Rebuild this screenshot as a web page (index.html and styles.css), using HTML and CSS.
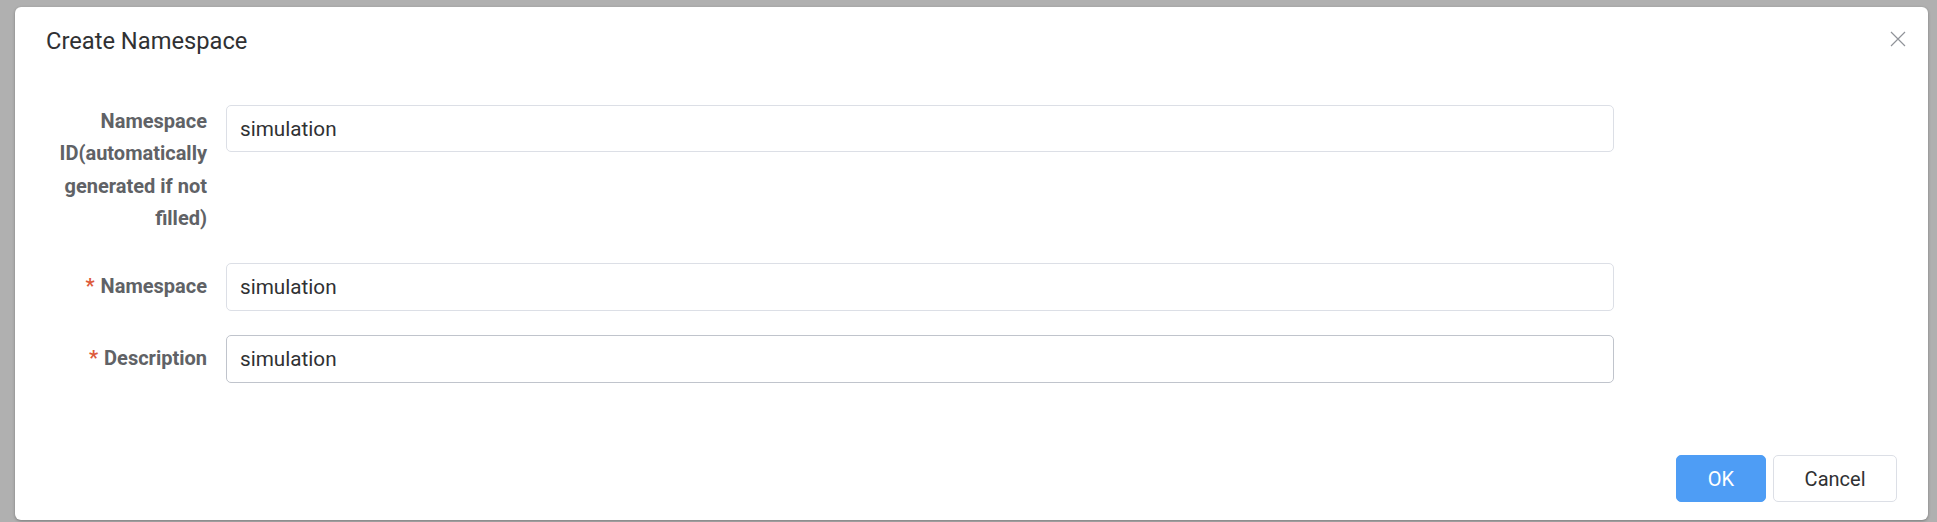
FILE: index.html
```html
<!DOCTYPE html>
<html lang="en">
<head>
<meta charset="utf-8">
<title>Create Namespace</title>
<link rel="stylesheet" href="styles.css">
</head>
<body>
<div class="dialog">
  <div class="dialog-header">
    <span class="dialog-title">Create Namespace</span>
    <button class="dialog-close" type="button" aria-label="Close">
      <svg width="16" height="16" viewBox="0 0 16 16"><path d="M1 1 L15 15 M15 1 L1 15" stroke="#909399" stroke-width="1.2" fill="none"/></svg>
    </button>
  </div>
  <div class="dialog-body">
    <div class="form-item form-item-first">
      <label class="form-label form-label-wrap">Namespace ID(automatically generated if not filled)</label>
      <div class="form-content"><input class="form-input" type="text" value="simulation"></div>
    </div>
    <div class="form-item form-item-second">
      <label class="form-label is-required">Namespace</label>
      <div class="form-content"><input class="form-input" type="text" value="simulation"></div>
    </div>
    <div class="form-item form-item-last">
      <label class="form-label is-required">Description</label>
      <div class="form-content"><input class="form-input is-hover" type="text" value="simulation"></div>
    </div>
  </div>
  <div class="dialog-footer">
    <button class="btn btn-primary" type="button">OK</button>
    <button class="btn btn-default" type="button">Cancel</button>
  </div>
</div>
</body>
</html>
```

FILE: styles.css
```css
html, body {
  margin: 0;
  padding: 0;
}
body {
  background: #b0b0b0;
  font-family: Roboto, "Liberation Sans", Arial, sans-serif;
  height: 522px;
  overflow: hidden;
}
.dialog {
  margin: 7px 9px 0 15px;
  background: #ffffff;
  border-radius: 6px;
  box-shadow: 0 1px 3px rgba(0, 0, 0, 0.3);
  display: flex;
  flex-direction: column;
}
.dialog-header {
  display: flex;
  justify-content: space-between;
  align-items: flex-start;
  padding: 18.6px 22px 0 31px;
}
.dialog-title {
  font-size: 23.7px;
  line-height: 30px;
  color: #303133;
}
.dialog-close {
  margin-top: 5px;
  width: 16px;
  height: 16px;
  padding: 0;
  border: 0;
  background: transparent;
  display: flex;
}
.dialog-body {
  padding: 49.4px 0 0 30px;
}
.form-item {
  display: flex;
  align-items: flex-start;
  margin-bottom: 24.5px;
}
.form-item-first {
  margin-bottom: 28.3px;
}
.form-item-last {
  margin-bottom: 0;
}
.form-label {
  box-sizing: border-box;
  width: 181px;
  padding-right: 19px;
  text-align: right;
  font-size: 20px;
  font-weight: bold;
  color: #606266;
  line-height: 47.5px;
}
.form-label-wrap {
  line-height: 32.5px;
}
.is-required::before {
  content: "*";
  color: #dd5a3a;
  margin-right: 6px;
}
.form-content {
  width: 1388px;
}
.form-input {
  box-sizing: border-box;
  display: block;
  width: 100%;
  height: 47.5px;
  padding: 0 13px;
  border: 1px solid #dcdfe6;
  border-radius: 5px;
  font-family: Roboto, "Liberation Sans", Arial, sans-serif;
  font-size: 20.7px;
  color: #303133;
  background: #ffffff;
  outline: none;
}
.form-input.is-hover {
  border-color: #c0c4cc;
}
.dialog-footer {
  display: flex;
  justify-content: flex-end;
  gap: 7.6px;
  padding: 72.2px 31px 17.7px 0;
}
.btn {
  box-sizing: border-box;
  height: 47.3px;
  padding: 0 30.5px;
  border-radius: 5px;
  font-family: Roboto, "Liberation Sans", Arial, sans-serif;
  font-size: 20px;
  line-height: 1;
  cursor: pointer;
}
.btn-primary {
  background: #4e9df5;
  border: 1px solid #4e9df5;
  color: #ffffff;
}
.btn-default {
  background: #ffffff;
  border: 1px solid #dcdfe6;
  color: #303133;
}
```
